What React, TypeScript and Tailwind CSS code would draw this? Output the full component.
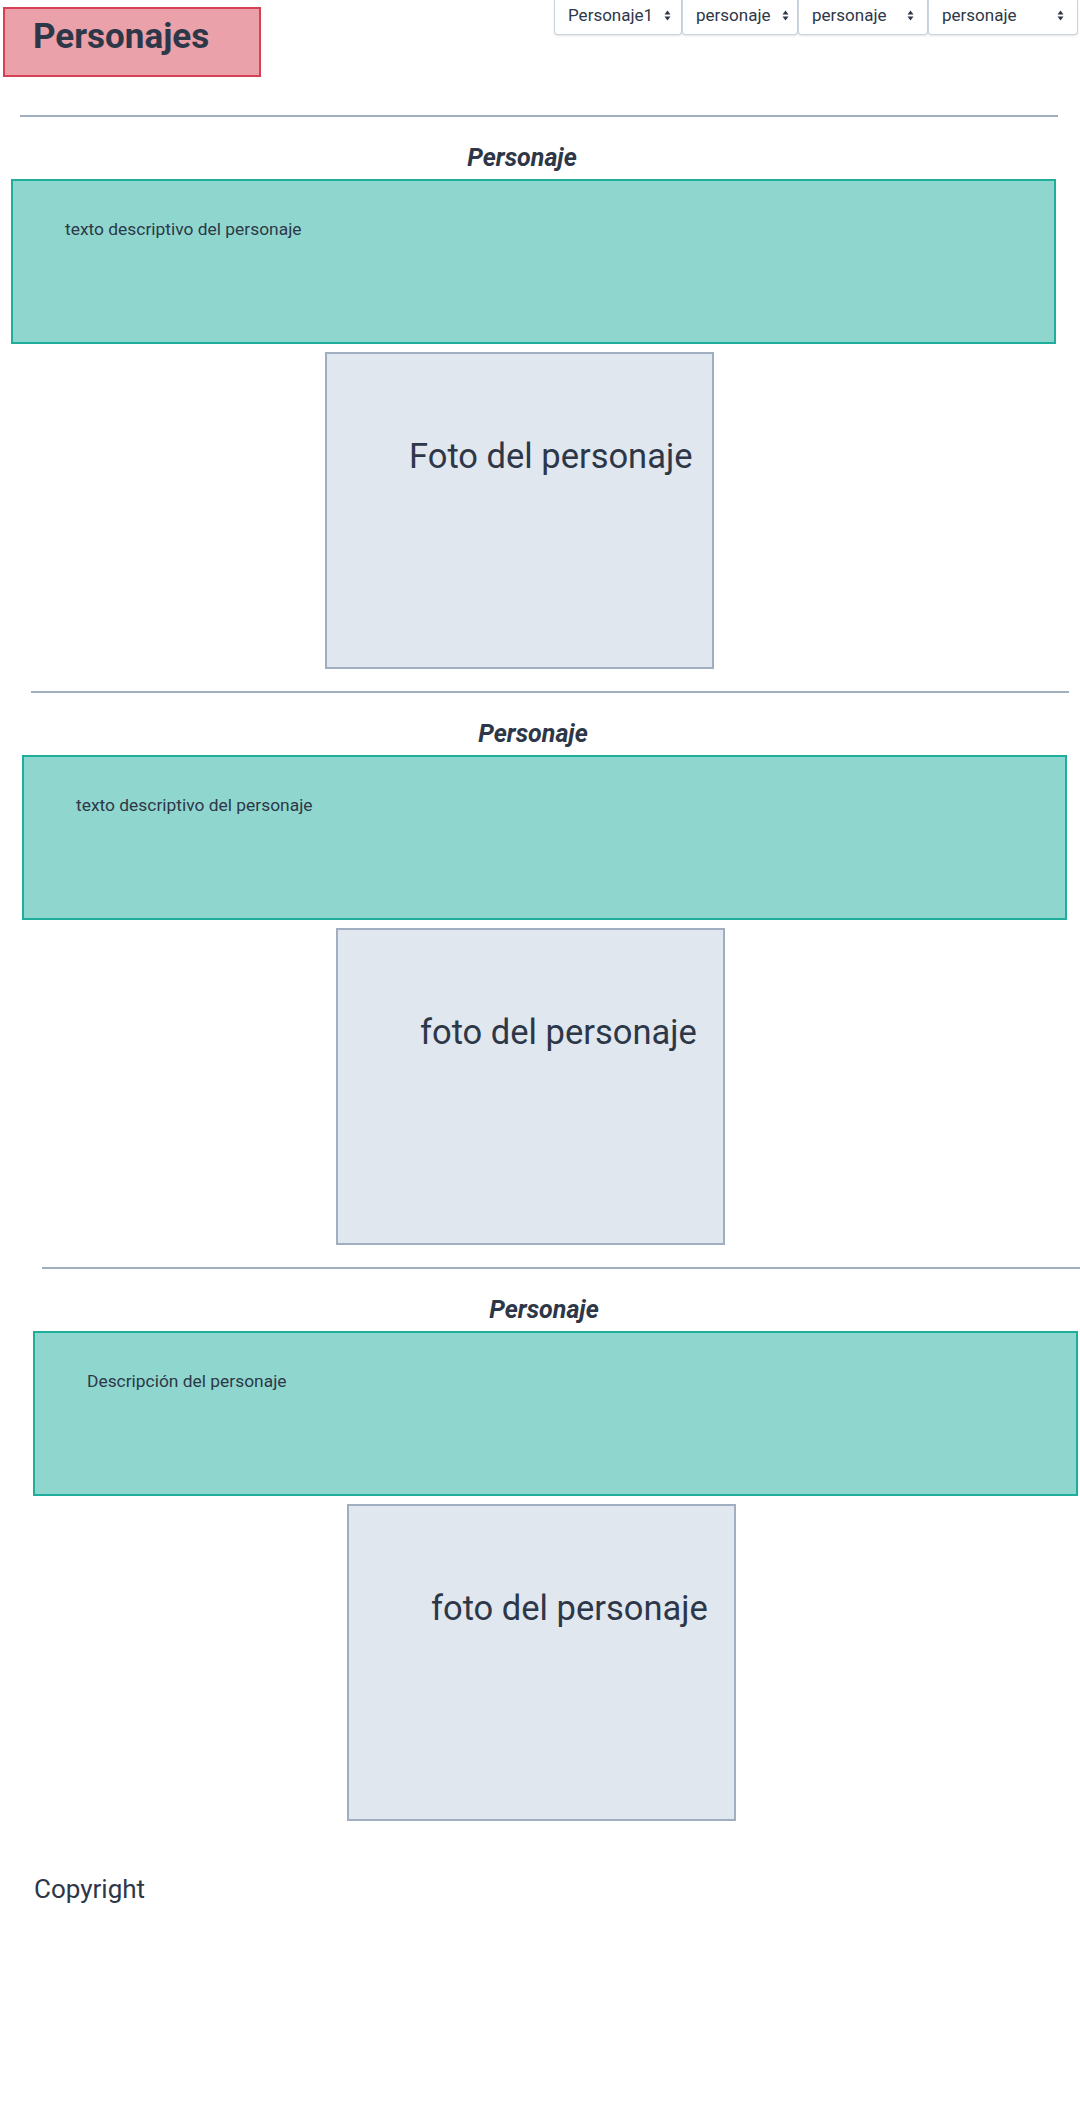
const selects = [
  { label: 'Personaje1', w: 'w-[128px]', pr: 'pr-[10px]' },
  { label: 'personaje', w: 'w-[116px]', pr: 'pr-[8px]' },
  { label: 'personaje', w: 'w-[130px]', pr: 'pr-[13px]' },
  { label: 'personaje', w: 'w-[150px]', pr: 'pr-[13px]' },
];

const sections = [
  { ml: 'ml-[11px]', text: 'texto descriptivo del personaje', foto: 'Foto del personaje' },
  { ml: 'ml-[22px]', text: 'texto descriptivo del personaje', foto: 'foto del personaje' },
  { ml: 'ml-[33px]', text: 'Descripción del personaje', foto: 'foto del personaje' },
];

function Arrows() {
  return (
    <svg width="7" height="11" viewBox="0 0 7 11" className="text-[#2d3748]">
      <path d="M3.5 0.5 L6.5 4.5 L0.5 4.5 Z" fill="currentColor" />
      <path d="M3.5 10.5 L6.5 6.5 L0.5 6.5 Z" fill="currentColor" />
    </svg>
  );
}

function Section({ ml, text, foto }: { ml: string; text: string; foto: string }) {
  return (
    <section className={`${ml} w-[1045px]`}>
      <div className="ml-[9px] w-[1038px] h-[2px] bg-[#a0aec0]" />
      <h2 className="w-[1022px] mt-[26px] h-[30px] leading-[30px] text-center text-[25px] font-bold italic">
        Personaje
      </h2>
      <div className="mt-[6px] h-[165px] border-2 border-[#1fae9b] bg-[#8fd7ce] pl-[52px] pt-[36px]">
        <p className="text-[17.4px] leading-[24px]">{text}</p>
      </div>
      <div className="w-[1017px] mt-[8px] mb-[22px]">
        <div className="mx-auto w-[389px] h-[317px] border-2 border-[#a0aec0] bg-[#e0e7ef] pl-[82px] pt-[82px]">
          <p className="text-[34.5px] leading-[40px] whitespace-nowrap">{foto}</p>
        </div>
      </div>
    </section>
  );
}

export default function App() {
  return (
    <div className="min-h-[2112px] bg-white text-[#2d3748] font-['Roboto',sans-serif]">
      <header className="flex justify-between items-start h-[115px]">
        <div className="mt-[7px] ml-[3px] w-[258px] h-[70px] border-2 border-[#d74158] bg-[#eaa1aa] pl-[28px] pt-[10px]">
          <h1 className="text-[35px] leading-[35px] font-bold">Personajes</h1>
        </div>
        <nav className="flex mr-[2px]">
          {selects.map((s, i) => (
            <div
              key={i}
              className={`${s.w} ${s.pr} h-[35px] pb-[3px] flex items-center justify-between pl-[13px] bg-white border border-t-0 border-[#cbd5e0] rounded-b-[4px] shadow-[0_1px_2px_rgba(0,0,0,0.12)] text-[17px]`}
            >
              <span>{s.label}</span>
              <Arrows />
            </div>
          ))}
        </nav>
      </header>
      {sections.map((s, i) => (
        <Section key={i} {...s} />
      ))}
      <footer className="mt-[53px] pl-[34px]">
        <p className="text-[26px] leading-[30px]">Copyright</p>
      </footer>
    </div>
  );
}
